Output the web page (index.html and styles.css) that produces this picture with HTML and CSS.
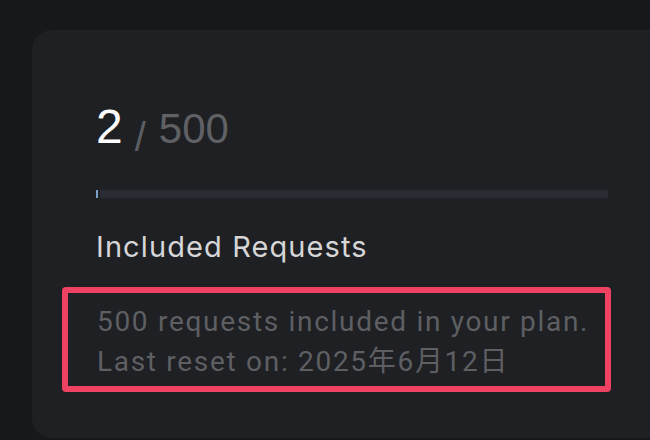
FILE: index.html
```html
<!DOCTYPE html>
<html lang="en">
<head>
<meta charset="UTF-8">
<meta name="viewport" content="width=device-width, initial-scale=1">
<title>Usage</title>
<link rel="stylesheet" href="styles.css">
</head>
<body>
<section class="card">
<div class="count"><span class="used">2</span><span class="slash">/</span><span class="total">500</span></div>
<div class="bar"><div class="fill" style="width:2px"></div><div class="track"></div></div>
<h2>Included Requests</h2>
<div class="note">
<p>500 requests included in your plan.</p>
<p>Last reset on: 2025年6月12日</p>
</div>
</section>
</body>
</html>
```

FILE: styles.css
```css
html,body{margin:0;padding:0;background:#17181b;overflow:hidden;}
body{width:650px;height:440px;}
.card{box-sizing:border-box;margin:30px 0 0 32px;width:640px;height:408px;padding:73px 64px 0;background:#1f2023;border-radius:20px;}
.count{height:48px;line-height:48px;font-family:'Liberation Sans',Arial,sans-serif;white-space:nowrap;}
.used{font-size:48px;color:#fbfbfb;}
.slash{display:inline-block;margin:0 13px 0 12px;font-size:40px;line-height:40px;color:#5d5e62;vertical-align:-8px;}
.total{font-size:42px;color:#606165;}
.bar{display:flex;gap:2px;height:8px;margin-top:39px;}
.fill{background:#7c9dc6;}
.track{flex:1;background:#2a2c33;}
h2{margin:32px 0 0;font-family:Inter,sans-serif;font-weight:400;font-size:29px;line-height:34px;letter-spacing:1.1px;color:#d6d6d8;}
.note{box-sizing:border-box;margin:23px 0 0 -34px;width:549px;padding:9px 0 4px 29px;border:6px solid #ef4162;border-radius:4px;}
.note p{margin:0;font-family:Roboto,'Noto Sans CJK JP',sans-serif;font-size:28px;line-height:40px;letter-spacing:1.7px;color:#5e5f63;white-space:nowrap;}
```
